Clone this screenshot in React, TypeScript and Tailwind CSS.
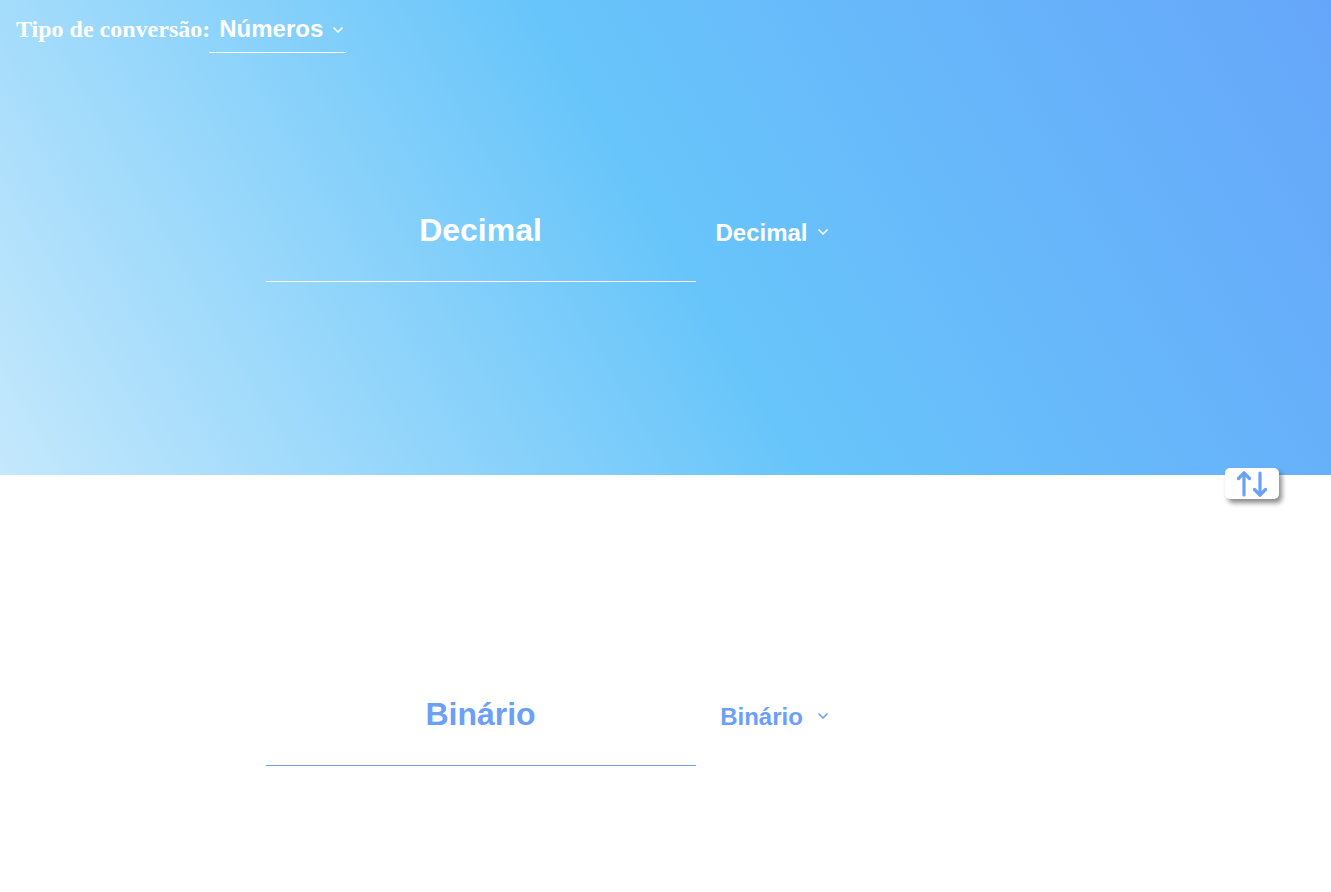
import React from 'react';
import { ChevronDown } from 'lucide-react';

const SwapIcon = () => (
  <svg width="30" height="26" viewBox="0 0 30 26" fill="none" stroke="currentColor" strokeWidth="3.2" strokeLinecap="round" strokeLinejoin="round">
    <path d="M7 24V2" />
    <path d="M1.5 7.5 7 2l5.5 5.5" />
    <path d="M23 2v22" />
    <path d="M17.5 18.5 23 24l5.5-5.5" />
  </svg>
);

const UnitSelect = ({ value, options, light }: { value: string; options: string[]; light?: boolean }) => (
  <div className={`relative ml-[10px] ${light ? 'text-white' : 'text-[#6b9ff8]'}`}>
    <select
      defaultValue={value}
      className="appearance-none bg-transparent border-0 outline-none w-[126px] h-[40px] pt-[4px] pr-[14px] text-center text-[24px] font-bold font-['Liberation_Sans',Arial,sans-serif] [text-align-last:center]"
    >
      {options.map((o) => (
        <option key={o} value={o} className="text-black">
          {o}
        </option>
      ))}
    </select>
    <ChevronDown className="pointer-events-none absolute right-[1px] top-[13px] h-4 w-4" strokeWidth={2.5} />
  </div>
);

const units = ['Decimal', 'Binário', 'Octal', 'Hexa'];

const App = () => {
  return (
    <main className="w-full min-h-[892px] bg-white font-['Liberation_Sans',Arial,sans-serif]">
      {/* From section */}
      <section className="relative h-[475px] bg-[linear-gradient(60deg,#c4e8fc_0%,#68c5fa_50%,#66a6fa_100%)] text-white">
        <div className="flex items-start pl-4 pt-[15px]">
          <label className="font-['Liberation_Serif','Times_New_Roman',serif] font-bold text-[24px] leading-[28px]">
            Tipo de conversão:
          </label>
          <div className="relative ml-[-1px] w-[137px] border-b border-white pb-[8px]">
            <select
              defaultValue="Números"
              className="appearance-none bg-transparent border-0 outline-none w-full h-[28px] pl-[10px] text-[24px] leading-[28px] font-bold"
            >
              <option className="text-black">Números</option>
              <option className="text-black">Texto</option>
            </select>
            <ChevronDown className="pointer-events-none absolute left-[121px] top-[7px] h-4 w-4" strokeWidth={2.5} />
          </div>
        </div>

        <div className="w-[800px] mx-auto mt-[127px] flex items-center">
          <input
            placeholder="Decimal"
            className="w-[430px] h-[102px] bg-transparent border-0 border-b border-white outline-none text-center text-[32px] font-bold text-white placeholder:text-white"
          />
          <UnitSelect value="Decimal" options={units} light />
        </div>

        <button className="absolute right-[52px] bottom-[-24px] w-[54px] h-[31px] rounded-[5px] bg-white shadow-[3px_4px_5px_rgba(0,0,0,0.45)] flex items-center justify-center text-[#6b9ff8]">
          <SwapIcon />
        </button>
      </section>

      {/* To section */}
      <section className="pt-[189px]">
        <div className="w-[800px] mx-auto flex items-center">
          <input
            placeholder="Binário"
            className="w-[430px] h-[102px] bg-transparent border-0 border-b border-[#6d9ff2] outline-none text-center text-[32px] font-bold text-[#6b9ff8] placeholder:text-[#6b9ff8]"
          />
          <UnitSelect value="Binário" options={units} />
        </div>
      </section>
    </main>
  );
};

export default App;
